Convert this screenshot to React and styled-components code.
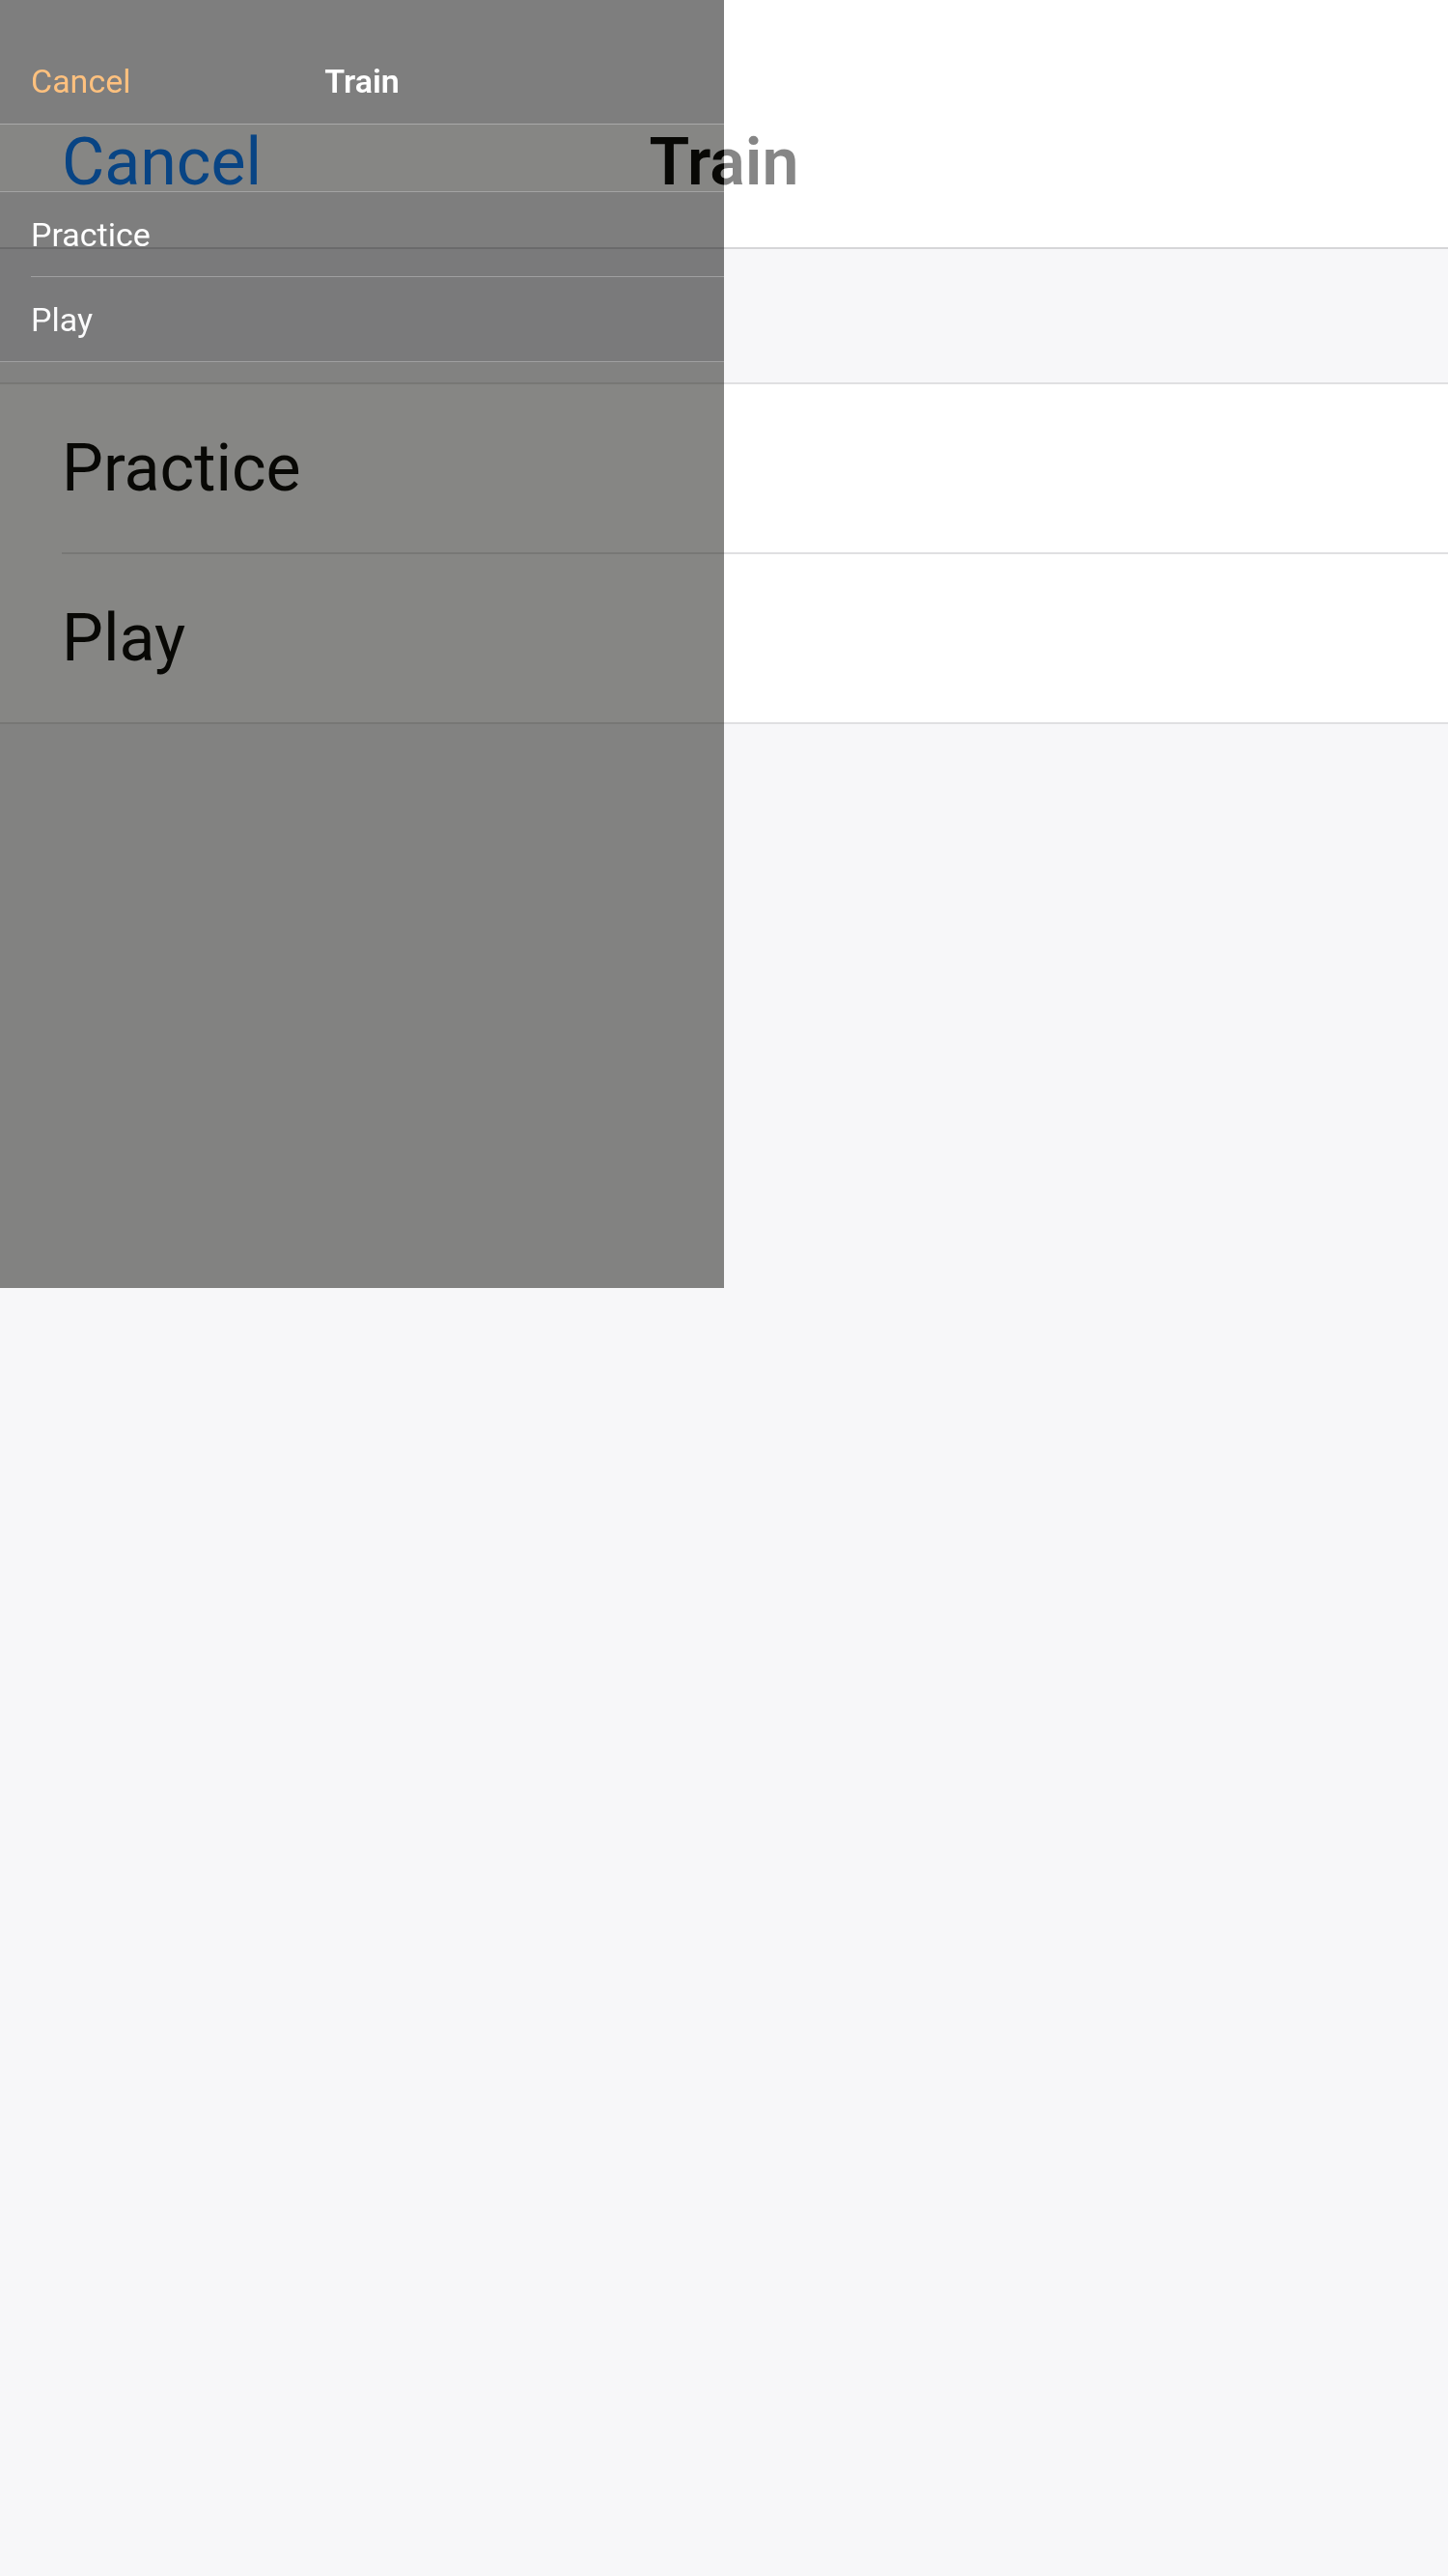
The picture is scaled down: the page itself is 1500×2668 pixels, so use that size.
import styled, { createGlobalStyle } from "styled-components";

const light = {
  nav: "#ffffff",
  navLine: "#d6d6d8",
  accent: "#007aff",
  text: "#000000",
  page: "#f7f7f9",
  line: "#e0e0e2",
  row: "#ffffff",
};

// the small copy is drawn with inverted colours and laid at half opacity
const inverted = {
  nav: "#000000",
  navLine: "#555555",
  accent: "#ff8500",
  text: "#ffffff",
  page: "#10100b",
  line: "#4a4a4a",
  row: "#000000",
};

const Global = createGlobalStyle`
  body {
    margin: 0;
    background: #f7f7f9;
    font-family: Roboto, "Liberation Sans", sans-serif;
  }
`;

const Page = styled.div`
  position: relative;
  width: 1500px;
  min-height: 2668px;
  background: #f7f7f9;
  overflow: hidden;
`;

const Screen = styled.div`
  width: ${(p) => p.$s * 375}px;
  min-height: ${(p) => p.$s * 667}px;
  background: ${(p) => p.$c.page};
`;

const Dim = styled.div`
  position: absolute;
  top: 0;
  left: 0;
  width: 750px;
  height: 1334px;
  overflow: hidden;
  opacity: 0.5;
`;

const NavBar = styled.header`
  box-sizing: border-box;
  height: ${(p) => p.$s * 64 + p.$s / 2}px;
  padding: ${(p) => p.$s * 20}px ${(p) => p.$s * 16}px 0;
  display: grid;
  grid-template-columns: 1fr auto 1fr;
  align-items: center;
  background: ${(p) => p.$c.nav};
  border-bottom: ${(p) => p.$s / 2}px solid ${(p) => p.$c.navLine};
`;

const NavButton = styled.span`
  justify-self: start;
  font-size: ${(p) => p.$s * 17}px;
  color: ${(p) => p.$c.accent};
`;

const Title = styled.span`
  font-size: ${(p) => p.$s * 17}px;
  font-weight: 600;
  color: ${(p) => p.$c.text};
  ${(p) =>
    p.$split &&
    `
    background: linear-gradient(90deg, #000 50%, #868686 50%);
    -webkit-background-clip: text;
    background-clip: text;
    color: transparent;
  `}
`;

const Gap = styled.div`
  height: ${(p) => p.$s * 35 - p.$s / 2}px;
`;

const Group = styled.ul`
  margin: 0;
  padding: 0;
  list-style: none;
  background: ${(p) => p.$c.row};
  border-top: ${(p) => p.$s / 2}px solid ${(p) => p.$c.line};
  border-bottom: ${(p) => p.$s / 2}px solid ${(p) => p.$c.line};
`;

const Row = styled.li`
  padding-left: ${(p) => p.$s * 16}px;
`;

const RowInner = styled.div`
  height: ${(p) => p.$s * 43.5}px;
  display: flex;
  align-items: center;
  font-size: ${(p) => p.$s * 17}px;
  color: ${(p) => p.$c.text};
  border-top: ${(p) => (p.$first ? "none" : `${p.$s / 2}px solid ${p.$c.line}`)};
`;

const items = ["Practice", "Play"];

const TrainScreen = ({ s, c, split }) => (
  <Screen $s={s} $c={c}>
    <NavBar $s={s} $c={c}>
      <NavButton $s={s} $c={c}>Cancel</NavButton>
      <Title $s={s} $c={c} $split={split}>Train</Title>
    </NavBar>
    <Gap $s={s} />
    <Group $s={s} $c={c}>
      {items.map((label, i) => (
        <Row key={label} $s={s}>
          <RowInner $s={s} $c={c} $first={i === 0}>
            {label}
          </RowInner>
        </Row>
      ))}
    </Group>
  </Screen>
);

export default function App() {
  return (
    <Page>
      <Global />
      <TrainScreen s={4} c={light} split />
      <Dim>
        <TrainScreen s={2} c={inverted} />
      </Dim>
    </Page>
  );
}
